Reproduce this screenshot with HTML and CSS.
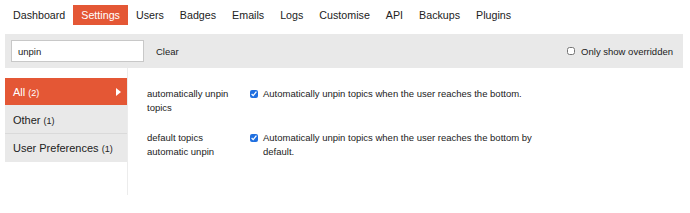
FILE: index.html
```html
<!DOCTYPE html>
<html lang="en">
  <head>
    <meta charset="UTF-8" />
    <title>Admin - Settings</title>
    <link rel="stylesheet" href="styles.css">
  </head>
  <body>
    <nav class="admin-nav">
      <a href="#">Dashboard</a>
      <a href="#" class="active">Settings</a>
      <a href="#">Users</a>
      <a href="#">Badges</a>
      <a href="#">Emails</a>
      <a href="#">Logs</a>
      <a href="#">Customise</a>
      <a href="#">API</a>
      <a href="#">Backups</a>
      <a href="#">Plugins</a>
    </nav>

    <div class="filter-bar">
      <input type="text" class="filter-input" value="unpin" />
      <button class="clear-btn">Clear</button>
      <label class="overridden">
        <input type="checkbox" />
        Only show overridden
      </label>
    </div>

    <div class="admin-main">
      <ul class="categories">
        <li class="active">
          <span>All <small>(2)</small></span>
          <span class="arrow"></span>
        </li>
        <li><span>Other <small>(1)</small></span></li>
        <li><span>User Preferences <small>(1)</small></span></li>
      </ul>

      <div class="settings">
        <div class="setting">
          <div class="setting-label">automatically unpin topics</div>
          <label class="setting-value">
            <input type="checkbox" checked />
            <span>Automatically unpin topics when the user reaches the bottom.</span>
          </label>
        </div>
        <div class="setting">
          <div class="setting-label">default topics automatic unpin</div>
          <label class="setting-value">
            <input type="checkbox" checked />
            <span>Automatically unpin topics when the user reaches the bottom by default.</span>
          </label>
        </div>
      </div>
    </div>
  </body>
</html>
```

FILE: styles.css
```css
body {
  margin: 0;
  font-family: "Liberation Sans", Arial, sans-serif;
  color: #222;
  background-color: #fff;
}

.admin-nav {
  display: flex;
  padding: 5px 5px 0;
}

.admin-nav a {
  font-size: 10.7px;
  line-height: 12px;
  padding: 4px 8px;
  color: #222;
  text-decoration: none;
}

.admin-nav a.active {
  background-color: #e45735;
  color: #fff;
}

.filter-bar {
  display: flex;
  align-items: center;
  margin: 9px 7px 0 5px;
  padding: 6px 10px 6px 6px;
  background-color: #e9e9e9;
}

.filter-input {
  box-sizing: border-box;
  width: 133px;
  height: 22px;
  padding: 0 6px;
  border: 1px solid #c8c8c8;
  background-color: #fff;
  font-family: inherit;
  font-size: 9.5px;
  color: #222;
  outline: none;
}

.clear-btn {
  margin-left: 6px;
  padding: 4px 6px;
  border: none;
  background: none;
  font-family: inherit;
  font-size: 9.5px;
  color: #222;
}

.overridden {
  display: flex;
  align-items: center;
  margin-left: auto;
  font-size: 9.5px;
}

.overridden input {
  width: 8px;
  height: 8px;
  margin: 0 6px 0 0;
}

.admin-main {
  display: flex;
}

.categories {
  box-sizing: border-box;
  width: 123px;
  min-height: 127px;
  margin: 0 0 0 5px;
  padding: 10px 0 0;
  list-style: none;
  border-right: 1px solid #ececec;
}

.categories li {
  display: flex;
  align-items: center;
  justify-content: space-between;
  height: 27px;
  padding: 0 6px 0 8px;
  background-color: #e9e9e9;
  border-bottom: 1px solid #dadada;
  font-size: 11px;
}

.categories li:last-child {
  border-bottom: none;
  height: 28px;
}

.categories li small {
  font-size: 9px;
}

.categories li.active {
  background-color: #e45735;
  border-bottom-color: #e9e9e9;
  color: #fff;
}

.arrow {
  width: 0;
  height: 0;
  border-top: 4.5px solid transparent;
  border-bottom: 4.5px solid transparent;
  border-left: 5px solid #fff;
}

.settings {
  padding: 19px 0 0 19px;
}

.setting {
  display: flex;
  margin-bottom: 16px;
  font-size: 9.5px;
  line-height: 14px;
}

.setting-label {
  width: 92px;
  margin-right: 11px;
}

.setting-value {
  display: flex;
  align-items: flex-start;
  width: 290px;
}

.setting-value input {
  flex: none;
  width: 8px;
  height: 8px;
  margin: 3px 5px 0 0;
  accent-color: #1f6fe0;
}
```
